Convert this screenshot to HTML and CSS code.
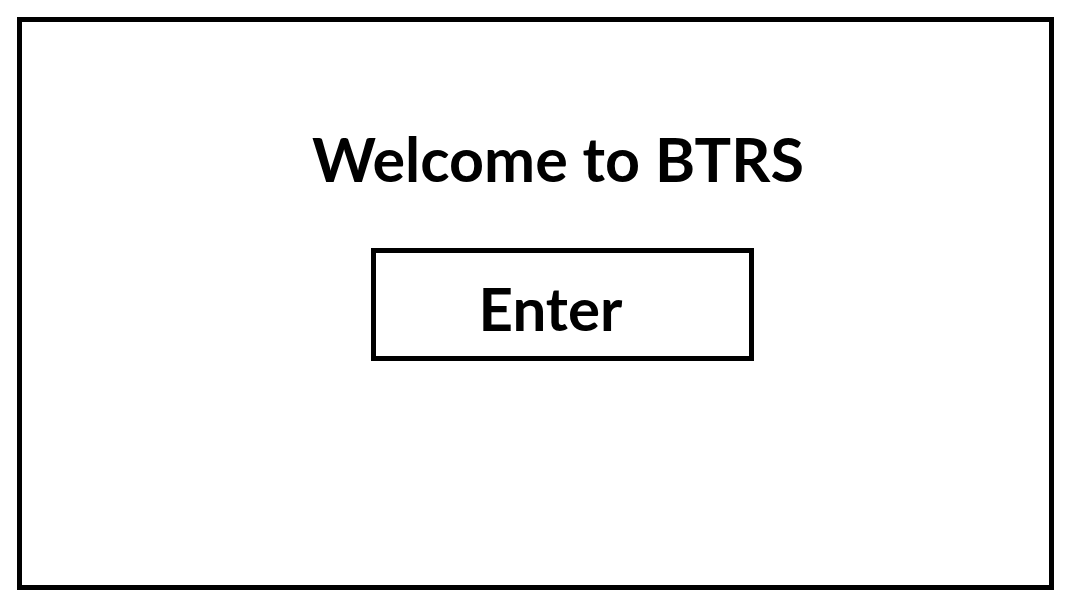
FILE: index.html
```html
<!DOCTYPE html>
<html>
<head>
<meta charset="utf-8">
<link rel="stylesheet" href="styles.css">
</head>
<body>
<main class="frame">
  <h1 class="title">Welcome to BTRS</h1>
  <button class="enter">Enter</button>
</main>
</body>
</html>
```
FILE: styles.css
```css
html, body {
  margin: 0;
  padding: 0;
  background: #fff;
}
body {
  padding: 17px 0 0 17px;
  font-family: Lato, "Liberation Sans", sans-serif;
}
.frame {
  box-sizing: border-box;
  width: 1037px;
  height: 573px;
  border: 5px solid #000;
  display: flex;
  flex-direction: column;
  align-items: center;
  padding-top: 100px;
}
.title {
  margin: 0;
  padding-left: 45px;
  font-size: 61px;
  font-weight: 700;
  line-height: 1.2;
  color: #000;
}
.enter {
  box-sizing: border-box;
  margin: 53px 0 0 54px;
  width: 383px;
  height: 113px;
  border: 5px solid #000;
  background: #fff;
  font-family: Lato, "Liberation Sans", sans-serif;
  font-size: 60px;
  font-weight: 700;
  color: #000;
  padding: 6px 24px 0 0;
  display: flex;
  align-items: center;
  justify-content: center;
  cursor: pointer;
}
```
